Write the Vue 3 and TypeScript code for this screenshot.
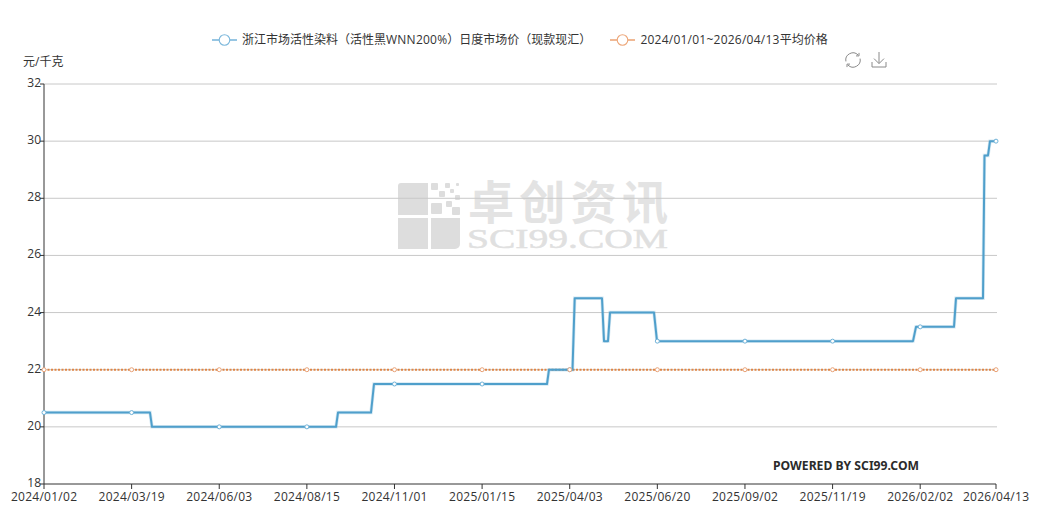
<script setup lang="ts">
const top = 84
const bottom = 484
const left = 44
const right = 996
const yOf = (v: number): number => bottom - ((v - 18) / 14) * (bottom - top)
const yTicks: number[] = [18, 20, 22, 24, 26, 28, 30, 32]
const dates: string[] = [
  '2024/01/02', '2024/03/19', '2024/06/03', '2024/08/15', '2024/11/01', '2025/01/15',
  '2025/04/03', '2025/06/20', '2025/09/02', '2025/11/19', '2026/02/02', '2026/04/13'
]
const xTicks = dates.map((d, i) => ({
  label: d,
  x: i === dates.length - 1 ? right : left + 87.62 * i
}))
const steps: [number, number][] = [
  [44, 20.5], [150, 20.5], [152, 20], [336, 20], [338, 20.5], [371, 20.5], [374, 21.5], [547, 21.5],
  [549, 22], [572.5, 22], [574.7, 24.5], [602, 24.5], [604, 23], [608, 23], [610, 24], [654, 24],
  [657, 23], [913, 23], [916, 23.5], [954, 23.5], [956, 24.5], [983, 24.5], [984.5, 29.5], [988, 29.5],
  [990, 30], [996, 30]
]
const linePoints = steps.map(([x, v]) => `${x},${yOf(v)}`).join(' ')
const valueAt = (x: number): number => {
  let v = steps[0][1]
  for (const [sx, sv] of steps) if (sx <= x + 0.5) v = sv
  return v
}
const blueMarks = xTicks.map((t) => ({ x: t.x, y: yOf(valueAt(t.x)) }))
const avgY = yOf(22)
const squares: [number, number, number][] = [
  [431, 183, 7], [439, 191, 6], [445, 183, 5], [450, 189, 4], [456, 183, 3], [455, 195, 5],
  [431, 203, 11], [446, 201, 6], [452, 207, 8]
]
</script>

<template>
  <div class="page">
    <div class="legend">
      <div class="legend-item">
        <svg class="legend-key" width="25" height="14" viewBox="0 0 25 14">
          <line x1="0" y1="7" x2="25" y2="7" stroke="#7db8dc" stroke-width="1.6" />
          <circle cx="12.5" cy="7" r="5.3" fill="#fff" stroke="#7db8dc" stroke-width="1.1" />
        </svg>
        <span>浙江市场活性染料（活性黑<span class="latin">WNN200%</span>）日度市场价（现款现汇）</span>
      </div>
      <div class="legend-item">
        <svg class="legend-key" width="25" height="14" viewBox="0 0 25 14">
          <line x1="0" y1="7" x2="25" y2="7" stroke="#eda77a" stroke-width="1.6" />
          <circle cx="12.5" cy="7" r="5.3" fill="#fff" stroke="#eda77a" stroke-width="1.1" />
        </svg>
        <span><span class="latin">2024/01/01~2026/04/13</span>平均价格</span>
      </div>
    </div>

    <div class="subhead">
      <span class="unit">元/千克</span>
      <div class="tools">
        <svg width="18" height="18" viewBox="0 0 18 18" fill="none" stroke="#8a8a8a" stroke-width="1">
          <path d="M1.9 10.4A7.2 7.2 0 0 1 14 3.9" />
          <path d="M16.1 7.6A7.2 7.2 0 0 1 4 14.1" />
          <path d="M15 1.9V4.9H12" />
          <path d="M3 16.1V13.1H6" />
        </svg>
        <svg width="16" height="18" viewBox="0 0 16 18" fill="none" stroke="#8a8a8a" stroke-width="1">
          <path d="M8 1V12.4" />
          <path d="M3 7.6L8 12.6L13 7.6" />
          <path d="M1 11V16H15V11" />
        </svg>
      </div>
    </div>

    <svg class="chart" width="1049" height="441" viewBox="0 72 1049 441">
      <g class="watermark">
        <path d="M401 183H428V215H398V186A3 3 0 0 1 401 183Z" />
        <rect x="398" y="218" width="30" height="31" />
        <path d="M431 218H460V244A5 5 0 0 1 455 249H431Z" />
        <rect v-for="(s, i) in squares" :key="i" :x="s[0]" :y="s[1]" :width="s[2]" :height="s[2]" rx="1" />
        <text class="wm-cn" x="468" y="219" textLength="200" lengthAdjust="spacing">卓创资讯</text>
        <text class="wm-en" x="467" y="248" textLength="201" lengthAdjust="spacingAndGlyphs">SCI99.COM</text>
      </g>

      <line
        v-for="v in yTicks.slice(1)"
        :key="'g' + v"
        :x1="left"
        :x2="right + 1"
        :y1="yOf(v)"
        :y2="yOf(v)"
        class="grid"
      />

      <line :x1="left" :x2="left" :y1="top" :y2="bottom" class="axis" />
      <line :x1="left" :x2="right" :y1="bottom" :y2="bottom" class="axis" />
      <g v-for="v in yTicks" :key="'y' + v">
        <line :x1="left - 4" :x2="left" :y1="yOf(v)" :y2="yOf(v)" class="axis" />
        <text class="tick" :x="left - 3" :y="yOf(v) + 3" text-anchor="end">{{ v }}</text>
      </g>
      <g v-for="t in xTicks" :key="t.label">
        <line :x1="t.x" :x2="t.x" :y1="bottom" :y2="bottom + 5" class="axis" />
        <text class="tick" :x="t.x" :y="bottom + 17" text-anchor="middle" textLength="66" lengthAdjust="spacing">{{ t.label }}</text>
      </g>

      <line :x1="left" :x2="right" :y1="avgY" :y2="avgY" class="avg" />
      <polyline :points="linePoints" class="price-glow" />
      <polyline :points="linePoints" class="price" />

      <circle v-for="(m, i) in blueMarks" :key="'b' + i" :cx="m.x" :cy="m.y" r="2" class="mark-blue" />
      <circle v-for="t in xTicks" :key="'a' + t.x" :cx="t.x" :cy="avgY" r="2" class="mark-orange" />

      <text class="powered" x="773" y="470" textLength="146" lengthAdjust="spacingAndGlyphs">POWERED BY SCI99.COM</text>
    </svg>
  </div>
</template>

<style>
html,
body {
  margin: 0;
  background: #fff;
}
</style>

<style scoped>
.page {
  width: 1049px;
  height: 513px;
  overflow: hidden;
  background: #fff;
  color: #333;
  font-family: "Open Sans", "Noto Sans CJK SC", sans-serif;
  font-size: 12px;
  display: flex;
  flex-direction: column;
}
.legend {
  display: flex;
  gap: 19px;
  padding: 32px 0 0 212px;
  height: 16px;
  line-height: 16px;
}
.legend-item {
  display: flex;
  align-items: center;
  gap: 5px;
  white-space: nowrap;
}
.legend-key {
  flex: none;
}
.latin {
  letter-spacing: 0.24px;
}
.subhead {
  display: flex;
  justify-content: space-between;
  align-items: center;
  height: 24px;
  padding: 0 162px 0 23px;
}
.unit {
  padding-top: 2px;
}
.tools {
  display: flex;
  align-items: center;
  gap: 9px;
  margin-top: -1px;
}
.chart {
  display: block;
  flex: none;
}
.watermark rect,
.watermark path {
  fill: #dddddd;
}
.wm-cn {
  font-family: "Noto Sans CJK SC", sans-serif;
  font-size: 46px;
  font-weight: 700;
  fill: #e3e3e3;
}
.wm-en {
  font-family: "Liberation Serif", serif;
  font-size: 28px;
  font-weight: 400;
  fill: #e0e0e0;
  stroke: #e0e0e0;
  stroke-width: 0.5;
}
.grid {
  stroke: #c8c8c8;
  stroke-width: 1;
}
.axis {
  stroke: #333;
  stroke-width: 1;
}
.tick {
  font-size: 12px;
  fill: #333;
}
.avg {
  stroke: #e08545;
  stroke-width: 2;
  stroke-dasharray: 2 1.5;
}
.price {
  fill: none;
  stroke: #4f9fcb;
  stroke-width: 2;
  stroke-linejoin: round;
}
.price-glow {
  fill: none;
  stroke: #4f9fcb;
  stroke-opacity: 0.25;
  stroke-width: 3.4;
}
.mark-blue {
  fill: #fff;
  stroke: #6fb2d8;
  stroke-width: 1;
}
.mark-orange {
  fill: #fff;
  stroke: #e9a277;
  stroke-width: 1;
}
.powered {
  font-family: "Noto Sans", sans-serif;
  font-size: 13px;
  font-weight: 700;
  fill: #2b2b2b;
}
</style>
